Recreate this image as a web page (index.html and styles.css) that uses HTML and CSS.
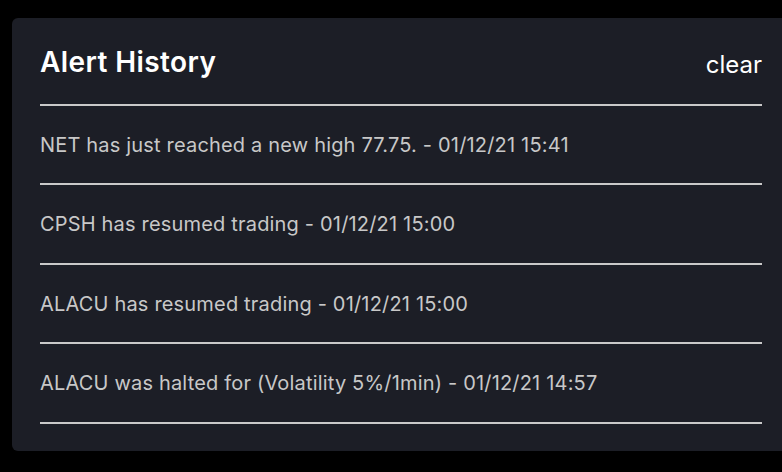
FILE: index.html
```html
<!DOCTYPE html>
<html lang="en">
<head>
<meta charset="utf-8">
<title>Alert History</title>
<link rel="stylesheet" href="styles.css">
</head>
<body>
<section class="card">
  <header class="card-head">
    <h2 class="title">Alert History</h2>
    <button class="clear" type="button">clear</button>
  </header>
  <ul class="alerts">
    <li class="alert">NET has just reached a new high 77.75. - 01/12/21 15:41</li>
    <li class="alert">CPSH has resumed trading - 01/12/21 15:00</li>
    <li class="alert">ALACU has resumed trading - 01/12/21 15:00</li>
    <li class="alert">ALACU was halted for (Volatility 5%/1min) - 01/12/21 14:57</li>
  </ul>
</section>
</body>
</html>
```
FILE: styles.css
```css
html, body {
  margin: 0;
  padding: 0;
  background: #000;
  height: 100%;
  overflow: hidden;
}
body {
  font-family: Inter, "Noto Sans", sans-serif;
  padding: 18px 0 0 12px;
  box-sizing: border-box;
}
.card {
  background: #1c1e26;
  border-radius: 6px 0 0 6px;
  width: 790px;
  height: 433px;
  box-sizing: border-box;
  padding: 0 8px 0 28px;
}
.card-head {
  display: flex;
  justify-content: space-between;
  align-items: flex-start;
  width: 722px;
  height: 88px;
  border-bottom: 2px solid #c9c9c9;
  box-sizing: border-box;
}
.title {
  margin: 27px 0 0;
  font-size: 28px;
  font-weight: 600;
  letter-spacing: 0.4px;
  color: #fff;
  line-height: 34px;
}
.clear {
  margin: 32px 0 0;
  padding: 0;
  background: none;
  border: 0;
  font: inherit;
  font-size: 24px;
  line-height: 30px;
  color: #fff;
}
.alerts {
  list-style: none;
  margin: 0;
  padding: 0;
  width: 722px;
}
.alert {
  height: 79.4px;
  box-sizing: border-box;
  border-bottom: 2px solid #c9c9c9;
  padding-top: 27px;
  font-size: 20px;
  letter-spacing: 0.18px;
  line-height: 24px;
  color: #c8c8c8;
}
```
